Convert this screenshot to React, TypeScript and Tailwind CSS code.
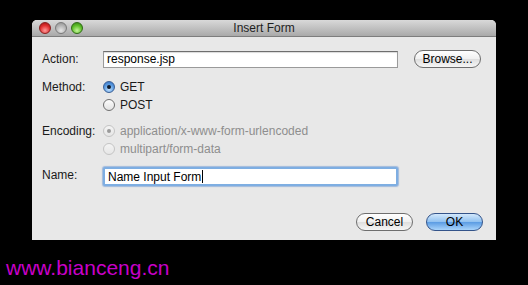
import React from "react";

const font = { fontFamily: '"Lucida Grande", "Liberation Sans", Arial, sans-serif' };

function Radio({ checked, disabled, label }: { checked?: boolean; disabled?: boolean; label: string }) {
  const circle = disabled
    ? "border-[#c4c4c4] bg-[linear-gradient(#f4f4f4,#e6e6e6)]"
    : checked
    ? "border-[#3a5f95] bg-[radial-gradient(circle_at_50%_75%,#bfe0ff_0%,#5b9be0_55%,#2e6cc0_100%)]"
    : "border-[#6f6f6f] bg-[linear-gradient(#fdfdfd,#e2e2e2)]";
  const dot = disabled ? "bg-[#9a9a9a]" : "bg-[#101a2a]";
  return (
    <div className="flex h-[14px] items-center">
      <div className={`flex h-[12px] w-[12px] items-center justify-center rounded-full border ${circle}`}>
        {checked && <div className={`h-[4px] w-[4px] rounded-full ${dot}`} />}
      </div>
      <span className={`ml-[5px] text-[12px] leading-none ${disabled ? "text-[#8e8e8e]" : "text-[#1a1a1a]"}`}>{label}</span>
    </div>
  );
}

export default function App() {
  return (
    <div className="h-[285px] w-[528px] overflow-hidden bg-black" style={font}>
      <div className="ml-[32px] mt-[20px] flex h-[220px] w-[464px] flex-col overflow-hidden rounded-t-[5px] bg-[#e8e8e8]">
        {/* title bar */}
        <div className="relative flex h-[17px] items-center border-b border-[#7d7d7d] bg-[linear-gradient(#d9d9d9,#a9a9a9)]">
          <div className="ml-[7px] flex items-center gap-[4px]">
            <div className="h-[12px] w-[12px] rounded-full border border-[#8a1f1f] bg-[radial-gradient(circle_at_50%_75%,#ff9a9a_0%,#e03030_55%,#9c1010_100%)]" />
            <div className="h-[12px] w-[12px] rounded-full border border-[#7a7a7a] bg-[radial-gradient(circle_at_50%_75%,#e6e6e6_0%,#b4b4b4_55%,#8c8c8c_100%)]" />
            <div className="h-[12px] w-[12px] rounded-full border border-[#2f6b16] bg-[radial-gradient(circle_at_50%_75%,#c4f59a_0%,#5fbf2a_55%,#317a12_100%)]" />
          </div>
          <div className="absolute inset-0 flex items-center justify-center text-[12px] text-[#1e1e1e]">Insert Form</div>
        </div>

        {/* body */}
        <div className="flex flex-1 flex-col pl-[10px]">
          {/* Action */}
          <div className="mt-[13px] flex h-[18px] items-center">
            <div className="w-[61px] text-[12px] text-[#1a1a1a]">Action:</div>
            <div className="flex h-[17px] w-[295px] items-center border border-[#9a9a9a] border-t-[#6e6e6e] bg-white pl-[3px] text-[12px] text-black shadow-[inset_0_1px_1px_rgba(0,0,0,0.15)]">
              response.jsp
            </div>
            <div className="ml-[16px] flex h-[18px] w-[67px] items-center justify-center rounded-full border border-[#6e6e6e] bg-[linear-gradient(#ffffff,#f0f0f0_50%,#dedede_51%,#f6f6f6)] text-[12px] text-black">
              Browse...
            </div>
          </div>

          {/* Method */}
          <div className="mt-[12px] flex">
            <div className="w-[61px] text-[12px] leading-[14px] text-[#1a1a1a]">Method:</div>
            <div className="flex flex-col gap-[4px]">
              <Radio checked label="GET" />
              <Radio label="POST" />
            </div>
          </div>

          {/* Encoding */}
          <div className="mt-[12px] flex">
            <div className="w-[61px] text-[12px] leading-[14px] text-[#1a1a1a]">Encoding:</div>
            <div className="flex flex-col gap-[4px]">
              <Radio checked disabled label="application/x-www-form-urlencoded" />
              <Radio disabled label="multipart/form-data" />
            </div>
          </div>

          {/* Name */}
          <div className="mt-[11px] flex items-start">
            <div className="w-[61px] pt-[1px] text-[12px] leading-[14px] text-[#1a1a1a]">Name:</div>
            <div className="flex h-[19px] w-[295px] items-center rounded-[2px] border-2 border-[#7eaee2] bg-white pl-[3px] text-[12px] text-black shadow-[0_0_1px_1px_rgba(90,140,210,0.5)]">
              Name Input Form<span className="ml-[1px] inline-block h-[13px] w-[1px] bg-black" />
            </div>
          </div>

          {/* Buttons */}
          <div className="mt-[27px] flex justify-end pr-[13px]">
            <div className="flex h-[18px] w-[57px] items-center justify-center rounded-full border border-[#6e6e6e] bg-[linear-gradient(#ffffff,#f0f0f0_50%,#dedede_51%,#f6f6f6)] text-[12px] text-black">
              Cancel
            </div>
            <div className="ml-[13px] flex h-[18px] w-[57px] items-center justify-center rounded-full border border-[#34548a] bg-[linear-gradient(#d3e8fb,#8fc0f0_50%,#5a9be3_51%,#a9d4fb)] text-[12px] text-black">
              OK
            </div>
          </div>
        </div>
      </div>

      <div className="ml-[6px] mt-[16px] text-[21px] leading-[24px] text-[#c800c8]" style={{ fontFamily: '"Liberation Sans", Arial, sans-serif' }}>
        www.bianceng.cn
      </div>
    </div>
  );
}
